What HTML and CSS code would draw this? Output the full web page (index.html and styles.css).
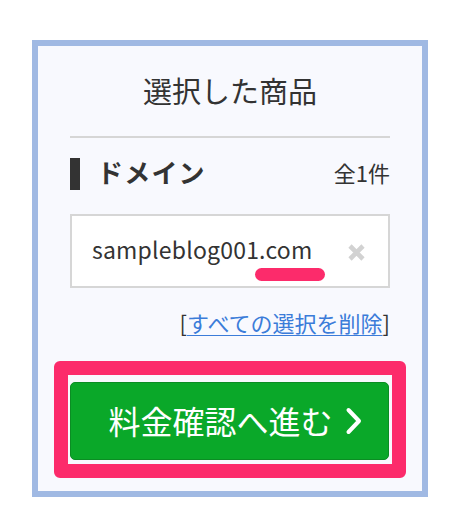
FILE: index.html
```html
<!DOCTYPE html>
<html lang="ja">
<head>
<meta charset="utf-8">
<title>選択した商品</title>
<link rel="stylesheet" href="styles.css">
</head>
<body>
<section class="panel">
  <h2 class="panel-title">選択した商品</h2>
  <div class="section-head">
    <span class="section-bar"></span>
    <span class="section-name">ドメイン</span>
    <span class="section-count">全1件</span>
  </div>
  <div class="item">
    <span class="item-name">sampleblog001.com</span>
    <span class="item-mark"></span>
    <button class="item-remove" aria-label="削除">
      <svg width="19" height="19" viewBox="0 0 19 19"><path d="M3 3 L16 16 M16 3 L3 16" stroke="#d2d2d2" stroke-width="4.6" stroke-linecap="butt" fill="none"/></svg>
    </button>
  </div>
  <div class="clear-row">[<a class="clear-link" href="#">すべての選択を削除</a>]</div>
  <div class="highlight">
    <button class="proceed">
      <span>料金確認へ進む</span>
      <svg class="chev" width="18" height="28" viewBox="0 0 18 28"><path d="M3.5 3 L14 14 L3.5 25" stroke="#fff" stroke-width="4" fill="none" stroke-linecap="round" stroke-linejoin="round"/></svg>
    </button>
  </div>
</section>
</body>
</html>
```

FILE: styles.css
```css
* { box-sizing: border-box; }
html, body { margin: 0; padding: 0; background: #ffffff; }
body {
  font-family: "Noto Sans CJK JP", "Noto Sans", sans-serif;
  color: #333333;
}
.panel {
  margin: 40px 0 0 32px;
  width: 396px;
  height: 457px;
  border: 6px solid #a0b9e3;
  background: #f8f9fe;
  padding: 0 32px;
  display: flex;
  flex-direction: column;
}
.panel-title {
  margin: 0;
  padding: 24px 0 26px;
  font-size: 29px;
  font-weight: 400;
  line-height: 40px;
  text-align: center;
  color: #333;
  border-bottom: 2px solid #d6d6d6;
}
.section-head {
  margin-top: 20px;
  height: 32px;
  display: flex;
  align-items: center;
}
.section-bar {
  width: 10px;
  height: 32px;
  background: #333333;
}
.section-name {
  margin-left: 17px;
  font-size: 26px;
  font-weight: 700;
  line-height: 32px;
  letter-spacing: 1.2px;
  margin-top: -4px;
}
.section-count {
  margin-left: auto;
  font-size: 22px;
  line-height: 32px;
  margin-top: -4px;
}
.item {
  position: relative;
  margin-top: 24px;
  height: 74px;
  background: #ffffff;
  border: 2px solid #d6d6d6;
  display: flex;
  align-items: center;
  padding: 0 22px 0 20px;
}
.item-name {
  font-size: 23px;
  letter-spacing: 0.2px;
  line-height: 30px;
  margin-top: -4px;
  color: #333;
}
.item-mark {
  position: absolute;
  left: 183px;
  top: 52px;
  width: 70px;
  height: 13px;
  border-radius: 7px;
  background: #fc2b6b;
}
.item-remove {
  margin-left: auto;
  border: 0;
  padding: 0;
  background: none;
  width: 19px;
  height: 19px;
  display: block;
  margin-top: 2px;
}
.item-remove svg { display: block; }
.clear-row {
  margin-top: 19px;
  text-align: right;
  font-size: 22px;
  line-height: 30px;
  color: #333;
}
.clear-link {
  color: #3b7cd9;
  text-decoration: underline;
  text-decoration-thickness: 1px;
  text-underline-offset: 3px;
}
.highlight {
  margin: 24px -16px 0;
  border: 14px solid #fc2b6b;
  border-radius: 6px;
  padding: 7px 3px 4px 2px;
  background: #f8f9fe;
}
.proceed {
  width: 100%;
  height: 78px;
  background: #0aa829;
  border: 1px solid #0b8d24;
  border-radius: 5px;
  color: #ffffff;
  font-family: "Noto Sans CJK JP", "Noto Sans", sans-serif;
  font-size: 32px;
  line-height: 40px;
  display: flex;
  align-items: center;
  justify-content: center;
  gap: 12px;
  padding: 0 0 0 12px;
}
.proceed span { margin-top: -3px; }
.chev { display: block; }
```
